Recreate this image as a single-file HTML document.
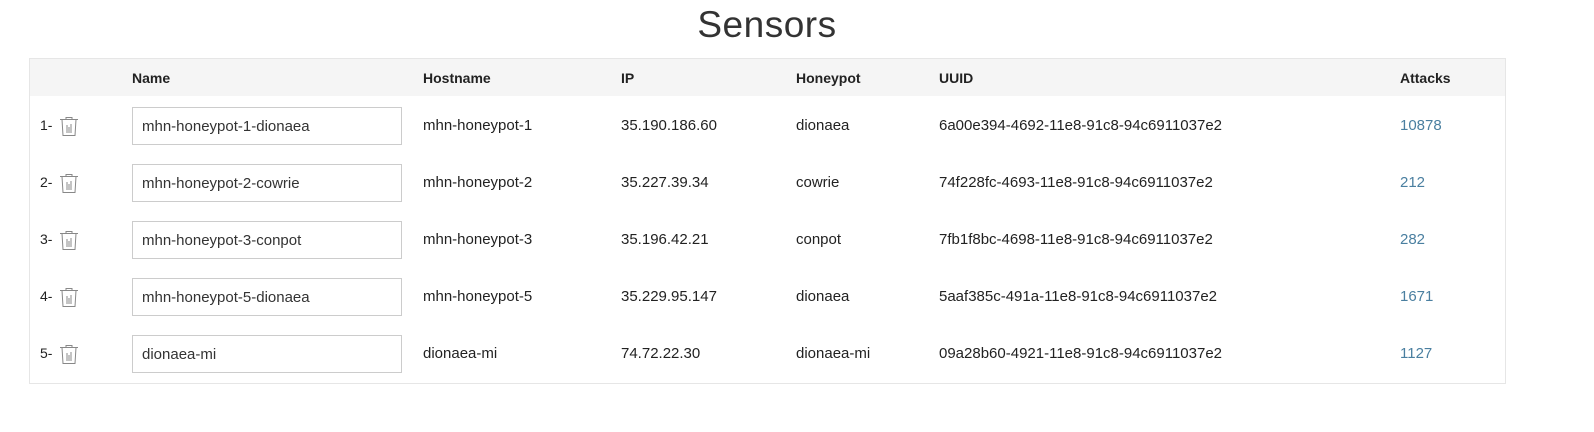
<!DOCTYPE html><html><head><style>
body{margin:0;width:1594px;height:432px;background:#fff;font-family:"Liberation Sans",sans-serif;position:relative;overflow:hidden;color:#222}
h1{position:absolute;top:0;left:0;width:1534px;text-align:center;margin:0;font-weight:300;font-size:37px;line-height:50px;color:#333;letter-spacing:0.5px}
.tbl{position:absolute;left:29px;top:58px;width:1475px;height:324px;border:1px solid #e6e6e6}
.hd{position:absolute;left:0;top:0;width:100%;height:37px;background:#f5f5f5}
.t{position:absolute;font-size:15px;white-space:nowrap}
.b{font-weight:bold;font-size:14px}
.in{position:absolute;left:102px;width:268px;height:36px;border:1px solid #ccc;box-sizing:content-box}
.in span{position:absolute;left:9px;top:10px;font-size:15px;color:#333}
.a{color:#4a7fa0}
</style></head><body>
<h1>Sensors</h1>
<div class="tbl"><div class="hd"></div>
<div class="t b" style="left:102px;top:11px">Name</div>
<div class="t b" style="left:393px;top:11px">Hostname</div>
<div class="t b" style="left:591px;top:11px">IP</div>
<div class="t b" style="left:766px;top:11px">Honeypot</div>
<div class="t b" style="left:909px;top:11px">UUID</div>
<div class="t b" style="left:1370px;top:11px">Attacks</div>
<div id="rows"></div>
</div>
<script>
var d=[["mhn-honeypot-1-dionaea","mhn-honeypot-1","35.190.186.60","dionaea","6a00e394-4692-11e8-91c8-94c6911037e2","10878"],
["mhn-honeypot-2-cowrie","mhn-honeypot-2","35.227.39.34","cowrie","74f228fc-4693-11e8-91c8-94c6911037e2","212"],
["mhn-honeypot-3-conpot","mhn-honeypot-3","35.196.42.21","conpot","7fb1f8bc-4698-11e8-91c8-94c6911037e2","282"],
["mhn-honeypot-5-dionaea","mhn-honeypot-5","35.229.95.147","dionaea","5aaf385c-491a-11e8-91c8-94c6911037e2","1671"],
["dionaea-mi","dionaea-mi","74.72.22.30","dionaea-mi","09a28b60-4921-11e8-91c8-94c6911037e2","1127"]];
var h="";d.forEach(function(r,i){var c=67+57*i;
h+='<div class="t" style="left:10px;top:'+(c-9)+'px;font-size:14px">'+(i+1)+'-</div>';
h+='<svg style="position:absolute;left:28px;top:'+(c-11)+'px" width="22" height="22" viewBox="0 0 22 22" fill="none" stroke="#888" stroke-width="1"><path d="M2 4.5h18M8 4.5V2.5h6v2M4 4.5l1 16h12l1-16M9 10v8M11 12v6M13 9v9"/></svg>';
h+='<div class="in" style="top:'+(c-19)+'px"><span>'+r[0]+'</span></div>';
[393,591,766,909,1370].forEach(function(x,j){h+='<div class="t'+(j==4?' a':'')+'" style="left:'+x+'px;top:'+(c-9)+'px">'+r[j+1]+'</div>';});});
document.getElementById("rows").innerHTML=h;
</script>
</body></html>
